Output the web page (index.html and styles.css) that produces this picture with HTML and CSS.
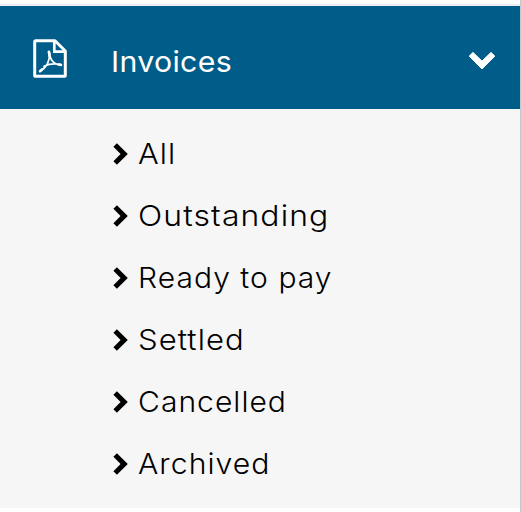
FILE: index.html
```
<!DOCTYPE html>
<html lang="en">
<head>
    <meta charset="UTF-8">
    <meta name="viewport" content="width=device-width, initial-scale=1.0">
    <title>Invoices</title>
    <link rel="stylesheet" href="styles.css">
</head>
<body>

    <!-- Side menu -->
    <nav class="sidebar">
        <div class="menu-header">
            <svg class="pdf-icon" viewBox="0 0 34 40" fill="none" stroke="#fff">
                <path d="M2.7 1.7H22L32.3 12V36.2Q32.3 37.3 31.2 37.3H2.8Q1.7 37.3 1.7 36.2V2.7Q1.7 1.7 2.7 1.7Z" stroke-width="3" stroke-linejoin="round"/>
                <path d="M21.3 2V12.7H32" stroke-width="2.7"/>
                <path d="M15.7 13C17.5 20 19 25 28 26.2M16.7 14C16.7 22 13 29 7 32.2M11 27.2C16 25 22 24.3 28 25.7" stroke-width="1.8" stroke-linecap="round"/>
                <path d="M15.9 12.8L16.6 17M7 32.2L9 30.5M26 25.5L28 26" stroke-width="2.6" stroke-linecap="round"/>
            </svg>
            <span class="menu-title">Invoices</span>
            <svg class="arrow-down" viewBox="0 0 26 18">
                <path d="M4 0.4L13 9.1L22 0.4L25.8 4.1L13 17L0.2 4.1Z" fill="#fff" stroke="#fff" stroke-width="1" stroke-linejoin="round"/>
            </svg>
        </div>

        <ul class="submenu">
            <li class="all"><svg class="arrow" viewBox="0 0 15 22"><path d="M3.9 0.3L14.8 11L3.9 21.7L0.4 18.3L7.6 11L0.4 3.7Z"/></svg><span>All</span></li>
            <li class="outstanding"><svg class="arrow" viewBox="0 0 15 22"><path d="M3.9 0.3L14.8 11L3.9 21.7L0.4 18.3L7.6 11L0.4 3.7Z"/></svg><span>Outstanding</span></li>
            <li class="ready"><svg class="arrow" viewBox="0 0 15 22"><path d="M3.9 0.3L14.8 11L3.9 21.7L0.4 18.3L7.6 11L0.4 3.7Z"/></svg><span>Ready to pay</span></li>
            <li class="settled"><svg class="arrow" viewBox="0 0 15 22"><path d="M3.9 0.3L14.8 11L3.9 21.7L0.4 18.3L7.6 11L0.4 3.7Z"/></svg><span>Settled</span></li>
            <li class="cancelled"><svg class="arrow" viewBox="0 0 15 22"><path d="M3.9 0.3L14.8 11L3.9 21.7L0.4 18.3L7.6 11L0.4 3.7Z"/></svg><span>Cancelled</span></li>
            <li class="archived"><svg class="arrow" viewBox="0 0 15 22"><path d="M3.9 0.3L14.8 11L3.9 21.7L0.4 18.3L7.6 11L0.4 3.7Z"/></svg><span>Archived</span></li>
        </ul>
    </nav>

</body>
</html>
```
FILE: styles.css
```
* {
    box-sizing: border-box;
}

body {
    margin: 0;
    background: #fff;
    font-family: Inter, "Open Sans", sans-serif;
    overflow: hidden;
}

.sidebar {
    height: 512px;
    padding-top: 4px;
    border-right: 1px solid #c8c8c8;
}

.menu-header {
    display: flex;
    align-items: center;
    height: 105px;
    padding: 0 25px 0 33px;
    border-top: 2px solid #eaeeef;
    background: #005c89;
    background-clip: padding-box;
    color: #fff;
}

.pdf-icon {
    width: 34px;
    height: 40px;
    margin-top: 2px;
}

.menu-title {
    margin-left: 44px;
    padding-top: 9px;
    font-size: 29px;
    line-height: 36px;
    letter-spacing: 0.3px;
    transform: scaleX(1.045);
    transform-origin: left;
}

.arrow-down {
    width: 26px;
    height: 18px;
    margin-left: auto;
    margin-top: 7px;
    overflow: visible;
}

.submenu {
    height: 399px;
    margin: 0;
    padding: 14px 0 0 113px;
    list-style: none;
    background: #f6f6f6;
    color: #000;
}

.submenu li {
    display: flex;
    align-items: center;
    height: 62px;
    font-size: 29px;
    font-weight: 300;
    letter-spacing: 1px;
    white-space: nowrap;
}

.submenu span {
    padding-bottom: 2px;
    transform-origin: left;
}

.arrow {
    width: 15px;
    height: 22px;
    margin-right: 10px;
}

/* Widen the labels */
.all span { transform: scaleX(1.06); }
.outstanding span { transform: scaleX(1.1); }
.ready span { transform: scaleX(1.035); }
.settled span { transform: scaleX(1.07); }
.cancelled span { transform: scaleX(1.035); }
.archived span { transform: scaleX(1.04); }
```
